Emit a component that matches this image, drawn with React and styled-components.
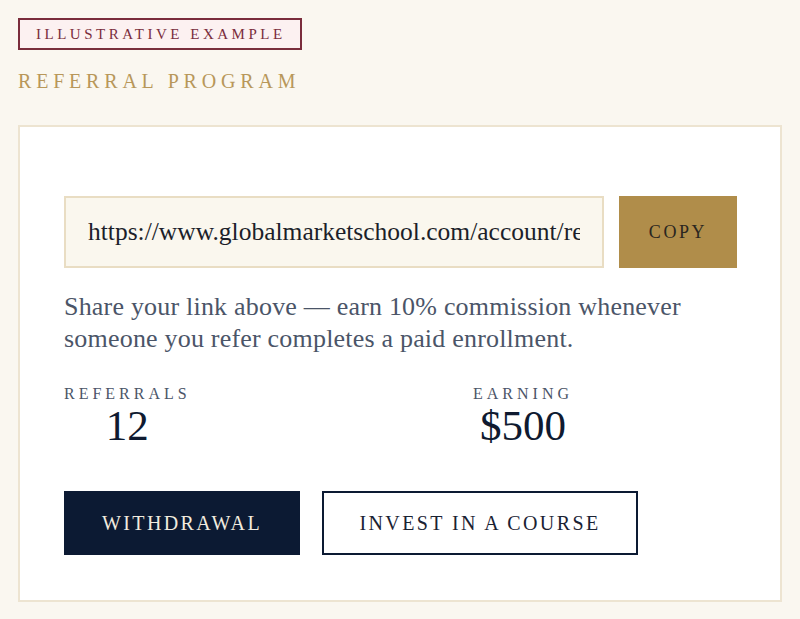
import React from "react";
import styled, { createGlobalStyle } from "styled-components";

const GlobalStyle = createGlobalStyle`
  * { box-sizing: border-box; }
  body {
    margin: 0;
    background: #faf7f0;
    font-family: "Liberation Serif", "Times New Roman", serif;
  }
`;

const Page = styled.main`
  padding: 18px 18px 16px;
  display: flex;
  flex-direction: column;
  align-items: flex-start;
`;

const Badge = styled.div`
  height: 32px;
  padding: 0 14px 0 16px;
  display: flex;
  align-items: center;
  border: 2px solid #7a2d3c;
  background: #fcf1f1;
  color: #7a2d3c;
  font-size: 15px;
  letter-spacing: 3.5px;
`;

const Title = styled.h2`
  margin: 19px 0 0;
  font-size: 20px;
  font-weight: normal;
  letter-spacing: 4.8px;
  color: #b8975a;
  line-height: 24px;
`;

const Card = styled.section`
  margin-top: 32px;
  align-self: stretch;
  background: #fff;
  border: 2px solid #ede4d1;
  padding: 69px 43px 45px 44px;
`;

const LinkRow = styled.div`
  display: flex;
  gap: 15px;
`;

const LinkField = styled.input`
  width: 540px;
  height: 72px;
  padding: 0 22px;
  background: #faf7ee;
  border: 2px solid #e9ddc3;
  border-radius: 0;
  outline: none;
  color: #1c1f2a;
  font-family: inherit;
  font-size: 25.5px;
`;

const CopyButton = styled.button`
  width: 118px;
  height: 72px;
  border: none;
  background: #b08d4a;
  color: #2a2620;
  font-family: inherit;
  font-size: 18px;
  letter-spacing: 2.6px;
`;

const Description = styled.p`
  margin: 23px 0 0;
  font-size: 26px;
  line-height: 32px;
  letter-spacing: 0.2px;
  color: #4b5568;
  max-width: 650px;
`;

const Stats = styled.div`
  margin-top: 30px;
  width: 509px;
  display: flex;
  justify-content: space-between;
`;

const Stat = styled.div`
  display: flex;
  flex-direction: column;
  align-items: center;
`;

const StatLabel = styled.div`
  font-size: 16px;
  letter-spacing: 4px;
  line-height: 18px;
  color: #4b5568;
`;

const StatValue = styled.div`
  font-size: 43px;
  line-height: 46px;
  color: #0f1a30;
`;

const Actions = styled.div`
  margin-top: 42px;
  display: flex;
  gap: 22px;
`;

const ActionButton = styled.button`
  height: 64px;
  width: ${({ $width }) => $width}px;
  font-family: inherit;
  font-size: 20px;
  letter-spacing: 2.4px;
  border: 2px solid #0c1a33;
  background: ${({ $primary }) => ($primary ? "#0c1a33" : "#fff")};
  color: ${({ $primary }) => ($primary ? "#f1ebdf" : "#1a2233")};
`;

export default function App() {
  return (
    <>
      <GlobalStyle />
      <Page>
        <Badge>ILLUSTRATIVE EXAMPLE</Badge>
        <Title>REFERRAL PROGRAM</Title>
        <Card>
          <LinkRow>
            <LinkField
              readOnly
              value="https://www.globalmarketschool.com/account/referral"
            />
            <CopyButton>COPY</CopyButton>
          </LinkRow>
          <Description>
            Share your link above — earn 10% commission whenever someone you
            refer completes a paid enrollment.
          </Description>
          <Stats>
            <Stat>
              <StatLabel>REFERRALS</StatLabel>
              <StatValue>12</StatValue>
            </Stat>
            <Stat>
              <StatLabel>EARNING</StatLabel>
              <StatValue>$500</StatValue>
            </Stat>
          </Stats>
          <Actions>
            <ActionButton $primary $width={236}>WITHDRAWAL</ActionButton>
            <ActionButton $width={316}>INVEST IN A COURSE</ActionButton>
          </Actions>
        </Card>
      </Page>
    </>
  );
}
